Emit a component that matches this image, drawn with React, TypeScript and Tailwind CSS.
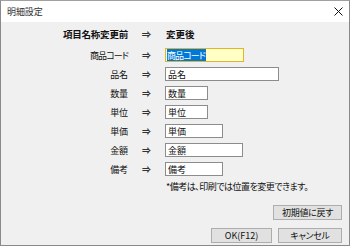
import React from 'react';

type Row = { label: string; value: string; wClass: string; kana?: boolean; focus?: boolean };

const rows: Row[] = [
  { label: '商品コード', value: '商品コード', wClass: 'w-[79px]', kana: true, focus: true },
  { label: '品名', value: '品名', wClass: 'w-[114px]' },
  { label: '数量', value: '数量', wClass: 'w-[43px]' },
  { label: '単位', value: '単位', wClass: 'w-[43px]' },
  { label: '単価', value: '単価', wClass: 'w-[58px]' },
  { label: '金額', value: '金額', wClass: 'w-[78px]' },
  { label: '備考', value: '備考', wClass: 'w-[58px]' },
];

export default function App() {
  return (
    <div className="w-[350px] h-[246px] bg-[#f0f0f0] border border-[#8a8a8a] border-t-[#a0a0a0] flex flex-col font-['Noto_Sans_CJK_JP',sans-serif] text-[9px] text-[#111] [font-feature-settings:'palt'] leading-none">
      {/* title bar */}
      <div className="h-[21px] bg-white flex items-center justify-between pl-[6px] pr-[6px]">
        <span className="text-[9px] text-[#333] tracking-[-0.1px]">明細設定</span>
        <svg width="9" height="9" viewBox="0 0 9 9" className="block">
          <path d="M0.5 0.5 L8.5 8.5 M8.5 0.5 L0.5 8.5" stroke="#111" strokeWidth="1" fill="none" />
        </svg>
      </div>

      {/* body */}
      <div className="flex-1 flex flex-col pt-[4px]">
        <div className="grid grid-cols-[127px_37px_1fr] h-[18px] items-center font-bold text-[9.5px]">
          <div className="flex justify-end tracking-[-0.2px]">項目名称変更前</div>
          <div className="flex justify-center text-[#333]">⇒</div>
          <div className="pl-[1px]">変更後</div>
        </div>

        <div className="grid grid-cols-[127px_37px_1fr] auto-rows-[19px] mt-[2px]">
          {rows.map((r) => (
            <React.Fragment key={r.label}>
              <div className={`flex justify-end items-center ${r.kana ? 'tracking-[-0.9px]' : 'tracking-[-0.1px]'}`}>{r.label}</div>
              <div className="flex justify-center items-center text-[#333] font-bold">⇒</div>
              <div className="flex items-start">
                {r.focus ? (
                  <div className={`mt-[2px] h-[14px] ${r.wClass} border border-[#e2b42a] bg-[#ffffc6] flex items-center pl-[1px]`}>
                    <span className="bg-[#0078d7] text-white h-[12px] flex items-center pr-[1px] tracking-[-0.9px]">{r.value}</span>
                  </div>
                ) : (
                  <div className={`mt-[2px] h-[14px] ${r.wClass} border border-[#8c8c8c] bg-white flex items-center pl-[2px] tracking-[-0.1px]`}>
                    {r.value}
                  </div>
                )}
              </div>
            </React.Fragment>
          ))}
          <div className="col-start-3 h-[12px] mt-[1px] flex items-center pl-[1px] tracking-[-0.5px]">
            *備考は、印刷では位置を変更できます。
          </div>
        </div>

        <div className="flex flex-col items-end pr-[7px]">
          <button className="mt-[7px] w-[69px] h-[15px] bg-[#e1e1e1] border border-[#adadad] flex items-center justify-center tracking-[-0.3px]">
            初期値に戻す
          </button>
          <div className="mt-[8px] flex gap-[6px]">
            <button className="w-[61px] h-[15px] bg-[#e1e1e1] border border-[#adadad] flex items-center justify-center">
              OK(F12)
            </button>
            <button className="w-[64px] h-[15px] bg-[#e1e1e1] border border-[#adadad] flex items-center justify-center tracking-[-0.3px]">
              キャンセル
            </button>
          </div>
        </div>
      </div>
    </div>
  );
}
